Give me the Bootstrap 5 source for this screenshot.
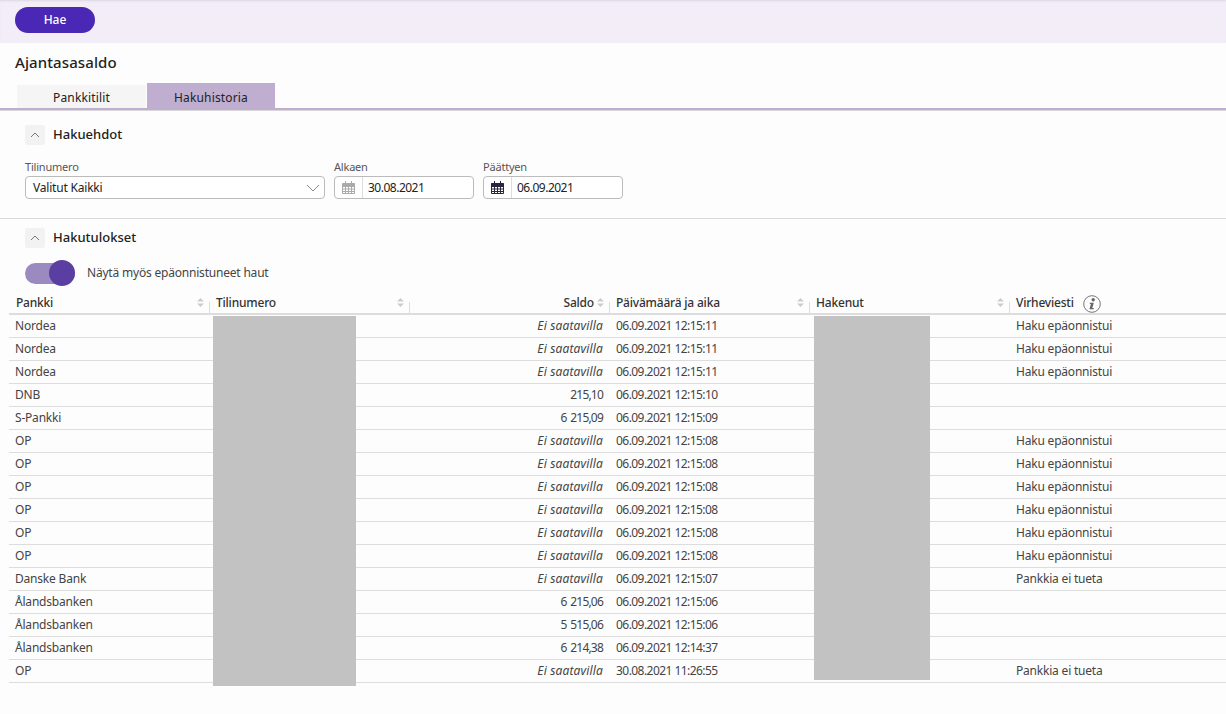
<!DOCTYPE html>
<html>

<head>
  <meta charset="utf-8">
  <meta name="viewport" content="width=device-width">
  <title>Ajantasasaldo</title>
  <link href="https://cdn.jsdelivr.net/npm/bootstrap@5.3.3/dist/css/bootstrap.min.css" rel="stylesheet" />
  <style>
    body { background: #fdfdfd; color: #333; font-family: "Noto Sans", "Open Sans", sans-serif; font-size: 12px; letter-spacing: -.2px; height: 714px; overflow: hidden; }
    .top-band { height: 43px; background: #f3edf8; padding: 7px 15px; box-shadow: inset 0 2px 2px -1px #dcd8e0; }
    .search-btn { width: 80px; height: 26px; padding: 0; border: 0; border-radius: 13px; background: #4a27b5; color: #fff; font-size: 12px; font-weight: 500; }
    .page-title { margin: 9px 0 0 15px; height: 20px; font-size: 15px; line-height: 20px; font-weight: 500; letter-spacing: .1px; color: #222; }
    .tab-row { height: 27px; margin-top: 11px; padding-left: 17px; border-bottom: 2px solid #bfaed0; }
    .tab-item { display: block; text-align: center; font-size: 12px; letter-spacing: .15px; color: #222; text-decoration: none; }
    .tab-off { width: 129px; height: 23px; line-height: 25px; background: #f5f5f5; margin-right: 1px; }
    .tab-on { width: 128px; height: 25px; line-height: 29px; background: #bfaed0; }
    .section-head { padding-left: 25px; gap: 8px; height: 20px; }
    .toggle-box { width: 20px; height: 20px; background: #f2f2f2; border-radius: 2px; }
    .section-title { font-size: 13px; font-weight: 500; letter-spacing: 0; color: #222; }
    .search-sec { border-top: 1px solid #d8d8d8; height: 108px; padding-top: 14px; }
    .filter-row { padding-left: 25px; margin-top: 15px; gap: 9px; }
    .field-label { font-size: 11px; line-height: 13px; color: #555; margin-bottom: 3px; }
    .field-box { height: 23px; background: #fff; border: 1px solid #bbb; border-radius: 4px; font-size: 12px; color: #222; }
    .acct-box { width: 300px; padding: 0 4px 0 7px; }
    .date-box { width: 140px; }
    .cal-cell { width: 28px; height: 100%; border-right: 1px solid #ddd; }
    .date-text { padding-left: 5px; letter-spacing: -.5px; }
    .results-sec { border-top: 1px solid #d8d8d8; padding-top: 9px; }
    .switch-row { padding-left: 25px; margin-top: 12px; height: 26px; gap: 12px; color: #444; }
    .switch-track { position: relative; width: 50px; height: 21px; border-radius: 11px; background: #9a8abf; }
    .switch-knob { position: absolute; right: 0; top: -2.5px; width: 26px; height: 26px; border-radius: 50%; background: #5a3ea1; }
    .table-wrap { position: relative; margin: 5px 0 0 9px; }
    .result-table { table-layout: fixed; width: 1217px; margin: 0; --bs-table-bg: transparent; font-size: 12px; color: #444; }
    .wide-col { width: 200px; }
    .result-table th { position: relative; height: 23px; padding: 0 0 0 7px; line-height: 21px; font-weight: 500; color: #333; border-bottom: 2px solid #ddd; }
    .result-table td { height: 23px; padding: 0 6px; line-height: 22px; color: #444; border-bottom: 1px solid #ddd; white-space: nowrap; }
    .result-table td:nth-child(n+4) { padding-left: 7px; }
    .result-table th.amount { text-align: right; padding-right: 15px; }
    .result-table td.amount { text-align: right; }
    .result-table td.amount i { letter-spacing: .15px; word-spacing: 0; }
    .num-cell { letter-spacing: -.55px; }
    .result-table td.amount.num-cell { letter-spacing: -.8px; word-spacing: 1.5px; }
    .result-table th + th::before { content: ""; position: absolute; left: 0; top: 11px; height: 11px; border-left: 1px solid #ddd; }
    .sort-mark { position: absolute; right: 5px; top: 7px; display: block; }
    .mask-block { position: absolute; background: #c2c2c2; }
    .mask-account { left: 204px; top: 25px; width: 143px; height: 370px; }
    .mask-user { left: 805px; top: 25px; width: 116px; height: 364px; }
    .info-mark { margin: -4px 0 -4px 9px; vertical-align: middle; }
  </style>
</head>

<body>
  <div class="top-band">
    <button type="button" class="search-btn">Hae</button>
  </div>
  <h1 class="page-title">Ajantasasaldo</h1>
  <div class="tab-row d-flex align-items-end">
    <a class="tab-item tab-off" href="#">Pankkitilit</a>
    <a class="tab-item tab-on" href="#">Hakuhistoria</a>
  </div>

  <section class="search-sec">
    <div class="section-head d-flex align-items-center">
      <span class="toggle-box d-flex align-items-center justify-content-center">
        <svg width="10" height="6" viewBox="0 0 10 6"><path d="M1 5l4-4 4 4" fill="none" stroke="#777" /></svg>
      </span>
      <span class="section-title">Hakuehdot</span>
    </div>
    <div class="filter-row d-flex">
      <div>
        <div class="field-label">Tilinumero</div>
        <div class="field-box acct-box d-flex align-items-center justify-content-between">
          <span>Valitut Kaikki</span>
          <svg width="14" height="8" viewBox="0 0 14 8"><path d="M1 1l6 6 6-6" fill="none" stroke="#888" /></svg>
        </div>
      </div>
      <div>
        <div class="field-label">Alkaen</div>
        <div class="field-box date-box d-flex align-items-center">
          <span class="cal-cell d-flex align-items-center justify-content-center">
            <svg width="13" height="13" viewBox="0 0 13 13"><path d="M.5 2h12v3H.5z" fill="#aaa" /><path d="M.5 2.500h12v10H.5zM.5 5.500h12M.5 8h12M.5 10.500h12M3.500 2.500v10M6.500 2.500v10M9.500 2.500v10M3.500 0v3M9.500 0v3" fill="none" stroke="#aaa" /></svg>
          </span>
          <span class="date-text">30.08.2021</span>
        </div>
      </div>
      <div>
        <div class="field-label">Päättyen</div>
        <div class="field-box date-box d-flex align-items-center">
          <span class="cal-cell d-flex align-items-center justify-content-center">
            <svg width="13" height="13" viewBox="0 0 13 13"><path d="M.5 2h12v3H.5z" fill="#2b2440" /><path d="M.5 2.500h12v10H.5zM.5 5.500h12M.5 8h12M.5 10.500h12M3.500 2.500v10M6.500 2.500v10M9.500 2.500v10M3.500 0v3M9.500 0v3" fill="none" stroke="#2b2440" /></svg>
          </span>
          <span class="date-text">06.09.2021</span>
        </div>
      </div>
    </div>
  </section>

  <section class="results-sec">
    <div class="section-head d-flex align-items-center">
      <span class="toggle-box d-flex align-items-center justify-content-center">
        <svg width="10" height="6" viewBox="0 0 10 6"><path d="M1 5l4-4 4 4" fill="none" stroke="#777" /></svg>
      </span>
      <span class="section-title">Hakutulokset</span>
    </div>
    <div class="switch-row d-flex align-items-center">
      <span class="switch-track"><span class="switch-knob"></span></span>
      <span>Näytä myös epäonnistuneet haut</span>
    </div>
    <div class="table-wrap">
      <table class="table result-table">
        <colgroup>
          <col class="wide-col"><col class="wide-col"><col class="wide-col"><col class="wide-col"><col class="wide-col"><col>
        </colgroup>
        <thead>
          <tr>
            <th>Pankki<svg class="sort-mark" width="7" height="9" viewBox="0 0 7 9"><path d="M3.500 0L7 3.500H0zM3.500 9L0 5.500h7z" fill="#ccc" /></svg></th>
            <th>Tilinumero<svg class="sort-mark" width="7" height="9" viewBox="0 0 7 9"><path d="M3.500 0L7 3.500H0zM3.500 9L0 5.500h7z" fill="#ccc" /></svg></th>
            <th class="amount">Saldo<svg class="sort-mark" width="7" height="9" viewBox="0 0 7 9"><path d="M3.500 0L7 3.500H0zM3.500 9L0 5.500h7z" fill="#ccc" /></svg></th>
            <th>Päivämäärä ja aika<svg class="sort-mark" width="7" height="9" viewBox="0 0 7 9"><path d="M3.500 0L7 3.500H0zM3.500 9L0 5.500h7z" fill="#ccc" /></svg></th>
            <th>Hakenut<svg class="sort-mark" width="7" height="9" viewBox="0 0 7 9"><path d="M3.500 0L7 3.500H0zM3.500 9L0 5.500h7z" fill="#ccc" /></svg></th>
            <th>Virheviesti<svg class="info-mark" width="18" height="18" viewBox="0 0 18 18"><circle cx="9" cy="9" r="8.300" fill="none" stroke="#777" /><circle cx="10.200" cy="4.800" r="1.700" fill="#666" /><path d="M6.800 7.800h4l-1.500 5.200h1.400v1.200H6.400l1.500-5.200H6.800z" fill="#666" /></svg></th>
          </tr>
        </thead>
        <tbody>
          <tr><td>Nordea</td><td></td><td class="amount"><i>Ei saatavilla</i></td><td class="num-cell">06.09.2021 12:15:11</td><td></td><td>Haku epäonnistui</td></tr>
          <tr><td>Nordea</td><td></td><td class="amount"><i>Ei saatavilla</i></td><td class="num-cell">06.09.2021 12:15:11</td><td></td><td>Haku epäonnistui</td></tr>
          <tr><td>Nordea</td><td></td><td class="amount"><i>Ei saatavilla</i></td><td class="num-cell">06.09.2021 12:15:11</td><td></td><td>Haku epäonnistui</td></tr>
          <tr><td>DNB</td><td></td><td class="amount num-cell">215,10</td><td class="num-cell">06.09.2021 12:15:10</td><td></td><td></td></tr>
          <tr><td>S-Pankki</td><td></td><td class="amount num-cell">6 215,09</td><td class="num-cell">06.09.2021 12:15:09</td><td></td><td></td></tr>
          <tr><td>OP</td><td></td><td class="amount"><i>Ei saatavilla</i></td><td class="num-cell">06.09.2021 12:15:08</td><td></td><td>Haku epäonnistui</td></tr>
          <tr><td>OP</td><td></td><td class="amount"><i>Ei saatavilla</i></td><td class="num-cell">06.09.2021 12:15:08</td><td></td><td>Haku epäonnistui</td></tr>
          <tr><td>OP</td><td></td><td class="amount"><i>Ei saatavilla</i></td><td class="num-cell">06.09.2021 12:15:08</td><td></td><td>Haku epäonnistui</td></tr>
          <tr><td>OP</td><td></td><td class="amount"><i>Ei saatavilla</i></td><td class="num-cell">06.09.2021 12:15:08</td><td></td><td>Haku epäonnistui</td></tr>
          <tr><td>OP</td><td></td><td class="amount"><i>Ei saatavilla</i></td><td class="num-cell">06.09.2021 12:15:08</td><td></td><td>Haku epäonnistui</td></tr>
          <tr><td>OP</td><td></td><td class="amount"><i>Ei saatavilla</i></td><td class="num-cell">06.09.2021 12:15:08</td><td></td><td>Haku epäonnistui</td></tr>
          <tr><td>Danske Bank</td><td></td><td class="amount"><i>Ei saatavilla</i></td><td class="num-cell">06.09.2021 12:15:07</td><td></td><td>Pankkia ei tueta</td></tr>
          <tr><td>Ålandsbanken</td><td></td><td class="amount num-cell">6 215,06</td><td class="num-cell">06.09.2021 12:15:06</td><td></td><td></td></tr>
          <tr><td>Ålandsbanken</td><td></td><td class="amount num-cell">5 515,06</td><td class="num-cell">06.09.2021 12:15:06</td><td></td><td></td></tr>
          <tr><td>Ålandsbanken</td><td></td><td class="amount num-cell">6 214,38</td><td class="num-cell">06.09.2021 12:14:37</td><td></td><td></td></tr>
          <tr><td>OP</td><td></td><td class="amount"><i>Ei saatavilla</i></td><td class="num-cell">30.08.2021 11:26:55</td><td></td><td>Pankkia ei tueta</td></tr>
        </tbody>
      </table>
      <div class="mask-block mask-account"></div>
      <div class="mask-block mask-user"></div>
    </div>
  </section>

  <script src="https://cdn.jsdelivr.net/npm/bootstrap@5.3.3/dist/js/bootstrap.bundle.min.js"></script>
</body>

</html>
